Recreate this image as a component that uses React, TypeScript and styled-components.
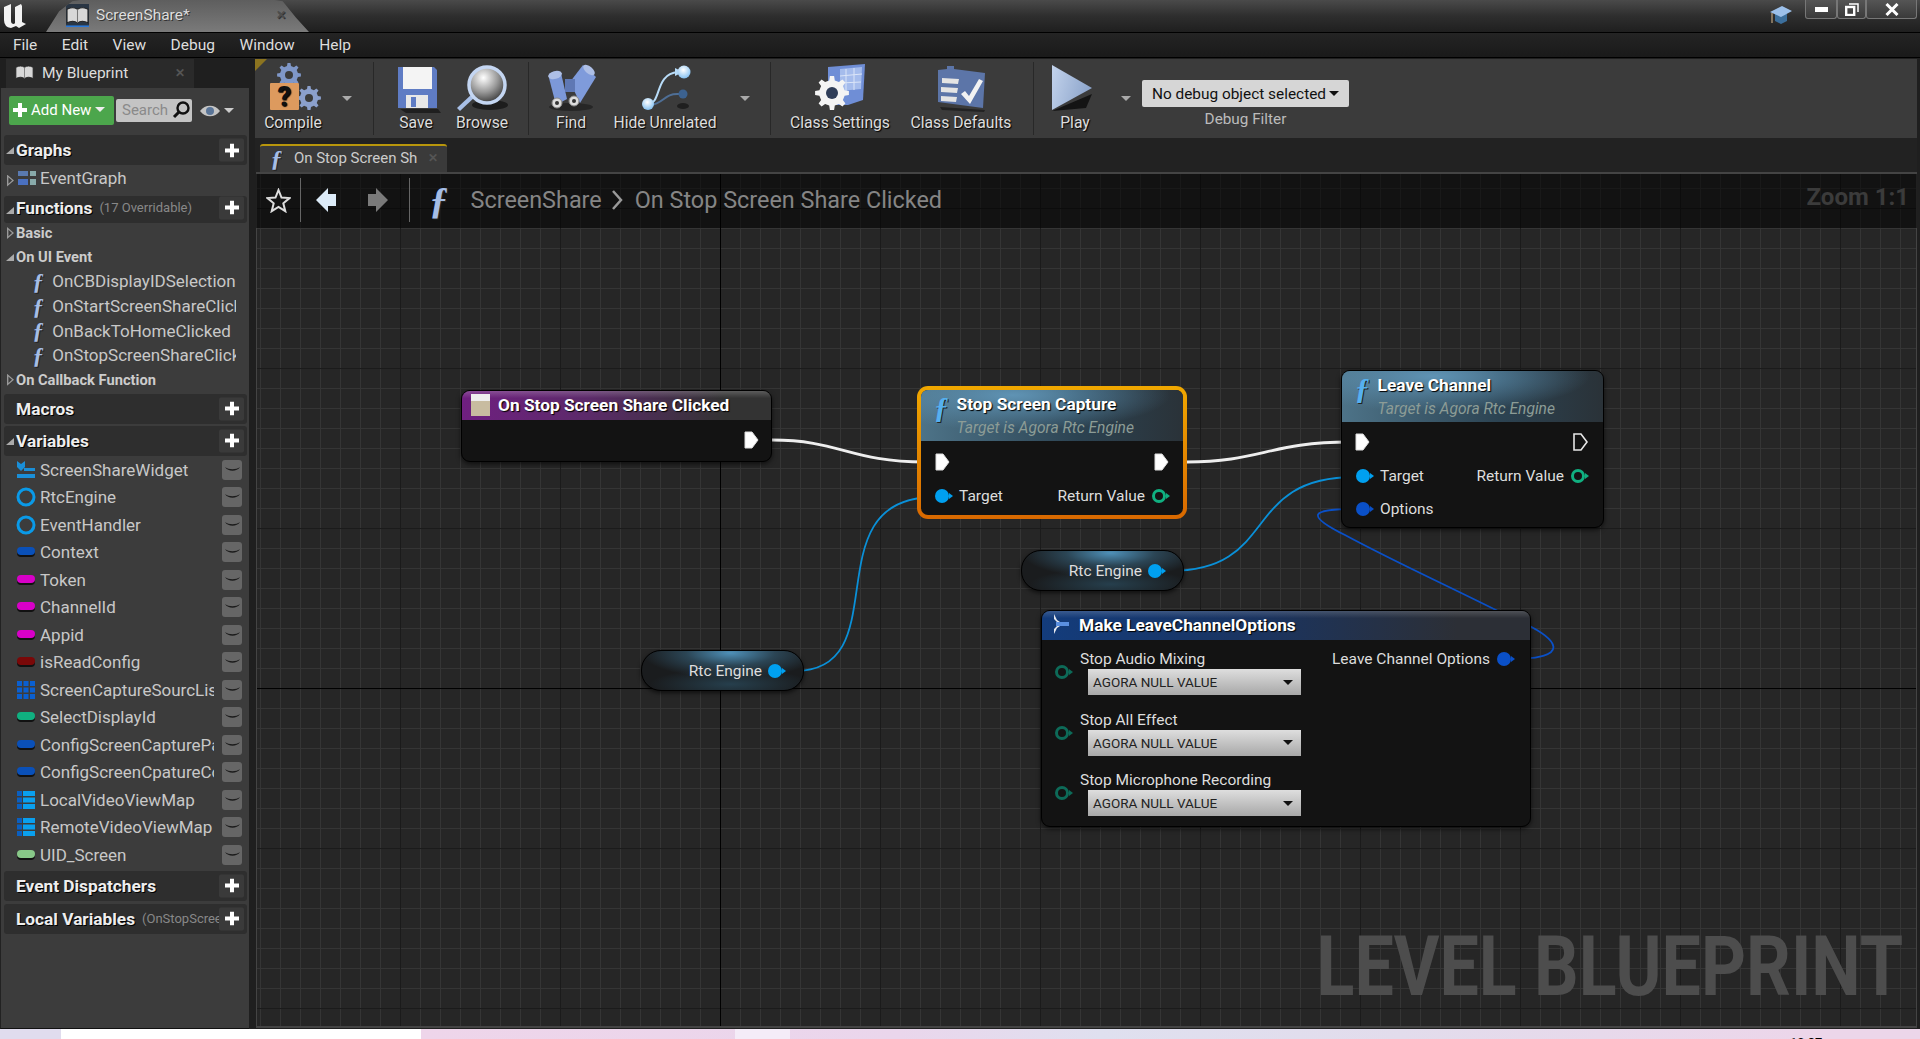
import React from "react";
import styled, { createGlobalStyle } from "styled-components";

const GlobalStyle = createGlobalStyle`
  html, body { margin: 0; padding: 0; background: #222; }
  body { font-family: Roboto, "Liberation Sans", sans-serif; }
  * { box-sizing: border-box; }
`;

const Screen = styled.div`
  width: 1920px;
  height: 1039px;
  overflow: hidden;
  display: flex;
  flex-direction: column;
  background: #1f1f1f;
`;

/* ---------- title + menu ---------- */

const TitleBar = styled.div`
  height: 33px;
  flex: none;
  display: flex;
  align-items: flex-end;
  position: relative;
  background: linear-gradient(#4a4a4a, #2e2e2e 50%, #1f1f1f);
  border-bottom: 1px solid #000;
`;

const Logo = styled.svg`
  width: 28px;
  height: 28px;
  margin: 0 17px 3px 1px;
`;

const DocTab = styled.div`
  width: 263px;
  height: 32px;
  display: flex;
  align-items: center;
  padding: 0 0 2px 20px;
  gap: 7px;
  color: #ddd;
  font-size: 15.5px;
  text-shadow: 1px 1px 0 #333;
  background: linear-gradient(#5e5e5e, #7a7a7a);
  clip-path: polygon(0 100%, 5% 35%, 10% 4%, 13% 0, 87% 0, 90% 4%, 95% 55%, 100% 100%);
`;

const TabClose = styled.span<{ $dim?: boolean }>`
  margin-left: auto;
  margin-right: ${(p) => (p.$dim ? 9 : 23)}px;
  color: ${(p) => (p.$dim ? "#555" : "#4d4d4d")};
  font-size: 12px;
  font-weight: 700;
`;

const WindowButtons = styled.div`
  position: absolute;
  right: 3px;
  top: 0;
  height: 19px;
  display: flex;
`;

const WindowButton = styled.div<{ $w: number }>`
  width: ${(p) => p.$w}px;
  height: 19px;
  display: flex;
  align-items: center;
  justify-content: center;
  background: linear-gradient(#555, #3a3a3a);
  border: 1px solid #777;
  border-top: none;
  border-radius: 0 0 3px 3px;
`;

const CapIcon = styled.svg`
  position: absolute;
  left: 1770px;
  top: 5px;
  width: 22px;
  height: 20px;
`;

const MenuBar = styled.div`
  height: 25px;
  flex: none;
  display: flex;
  align-items: center;
  padding-left: 13px;
  gap: 24.5px;
  color: #ddd;
  font-size: 15.5px;
  background: linear-gradient(#242424, #1a1a1a);
  border-bottom: 1px solid #000;
`;

/* ---------- body ---------- */

const Body = styled.div`
  flex: 1;
  min-height: 0;
  display: flex;
`;

const Side = styled.div`
  width: 255px;
  flex: none;
  display: flex;
  flex-direction: column;
  padding: 1px 6px 0 0;
`;

const SideTab = styled.div`
  margin-left: 6px;
  width: 188px;
  height: 29px;
  flex: none;
  display: flex;
  align-items: center;
  gap: 8px;
  padding: 0 0 2px 9px;
  color: #ddd;
  font-size: 15.5px;
  background: #2a2a2a;
`;

const SidePanel = styled.div`
  flex: 1;
  background: #3c3c3c;
  border-left: 1px solid #222;
  border-bottom: 1px solid #111;
  padding: 8px 0 0 3px;
`;

const SideTools = styled.div`
  height: 29px;
  display: flex;
  align-items: center;
  padding-left: 5px;
  margin-bottom: 10px;
`;

const AddNew = styled.div`
  width: 105px;
  height: 29px;
  display: flex;
  align-items: center;
  gap: 4px;
  padding: 0 0 2px 4px;
  color: #fff;
  font-size: 15px;
  background: #4ca64c;
  border-radius: 2px;
`;

const SearchBox = styled.div`
  width: 76px;
  height: 23px;
  margin-left: 2px;
  display: flex;
  align-items: center;
  justify-content: space-between;
  padding: 0 1px 1px 6px;
  color: #8a8a8a;
  font-size: 15px;
  background: #c4c4c4;
  border-radius: 2px;
`;

const EyeWrap = styled.div`
  margin-left: 7px;
  display: flex;
  align-items: center;
  gap: 3px;
`;

const SmallCaret = styled.span<{ $c?: string; $w?: number }>`
  display: inline-block;
  width: 0;
  height: 0;
  border-left: ${(p) => p.$w ?? 5}px solid transparent;
  border-right: ${(p) => p.$w ?? 5}px solid transparent;
  border-top: ${(p) => p.$w ?? 5}px solid ${(p) => p.$c ?? "#ccc"};
`;

const Band = styled.div<{ $h?: number; $mt?: number; $pb?: number }>`
  width: 243px;
  height: ${(p) => p.$h ?? 30}px;
  margin-top: ${(p) => p.$mt ?? 0}px;
  padding: 0 0 ${(p) => p.$pb ?? 0}px 12px;
  flex: none;
  display: flex;
  align-items: center;
  position: relative;
  color: #eee;
  font-size: 17.3px;
  font-weight: 700;
  white-space: nowrap;
  overflow: hidden;
  text-shadow: 1px 1px 0 #000;
  background: #2e2e2e;
  border-radius: 3px;
`;

const BandArrow = styled.span`
  position: absolute;
  left: 2px;
  top: 50%;
  margin-top: -3px;
  width: 0;
  height: 0;
  border-bottom: 7px solid #aaa;
  border-left: 8px solid transparent;
`;

const BandNote = styled.span`
  margin-left: 7px;
  color: #888;
  font-size: 13px;
  font-weight: 400;
  text-shadow: none;
`;

const PlusBox = styled.div<{ $up?: number }>`
  position: absolute;
  right: 3px;
  top: calc(50% - ${(p) => p.$up ?? 0}px);
  transform: translateY(-50%);
  width: 25px;
  height: 23px;
  display: flex;
  align-items: center;
  justify-content: center;
  background: #3a3a3a;
  border-radius: 2px;
`;

const Category = styled.div<{ $h: number; $mt?: number }>`
  height: ${(p) => p.$h}px;
  margin-top: ${(p) => p.$mt ?? 0}px;
  display: flex;
  align-items: center;
  padding-left: 12px;
  position: relative;
  color: #ccc;
  font-size: 14.7px;
  font-weight: 700;
`;

const HollowArrow = styled.span`
  position: absolute;
  left: 3px;
  top: 50%;
  margin-top: -6px;
  width: 7px;
  height: 12px;
  background: #999;
  clip-path: polygon(0 0, 100% 50%, 0 100%, 0 0, 20% 22%, 20% 78%, 72% 50%, 20% 22%);
`;

const FnRow = styled.div`
  width: 232px;
  height: 24.7px;
  display: flex;
  align-items: center;
  padding-left: 27px;
  gap: 7px;
  color: #c8c8c8;
  font-size: 17px;
  white-space: nowrap;
  overflow: hidden;
`;

const FuncGlyph = styled.span<{ $size: number; $c?: string }>`
  flex: none;
  display: inline-block;
  width: ${(p) => p.$size * 0.62}px;
  text-align: center;
  font-family: "Liberation Serif", serif;
  font-style: italic;
  font-weight: 700;
  font-size: ${(p) => p.$size}px;
  line-height: 1;
  color: ${(p) => p.$c ?? "#a5bde6"};
  text-shadow: 1px 1px 0 #222;
`;

const GraphRow = styled.div`
  height: 31px;
  display: flex;
  align-items: center;
  position: relative;
  padding: 0 0 5px 13px;
  gap: 3px;
  color: #c8c8c8;
  font-size: 17px;
`;

const VarRow = styled.div`
  height: 27.5px;
  display: flex;
  align-items: center;
  padding-left: 12px;
  gap: 4px;
  color: #c8c8c8;
  font-size: 17px;
`;

const VarName = styled.span`
  width: 174px;
  overflow: hidden;
  white-space: nowrap;
`;

const EyeBox = styled.div`
  width: 20px;
  height: 20px;
  margin-left: 4px;
  display: flex;
  align-items: center;
  justify-content: center;
  background: #666;
  border-radius: 3px;
`;

const Main = styled.div`
  flex: 1;
  min-width: 0;
  display: flex;
  flex-direction: column;
  padding: 1px 3px 1px 0;
  position: relative;
`;

const Toolbar = styled.div`
  height: 79px;
  flex: none;
  display: flex;
  align-items: flex-start;
  background: #3b3b3b;
  position: relative;
`;

const Corner = styled.div`
  position: absolute;
  left: 0;
  top: 0;
  width: 0;
  height: 0;
  border-top: 12px solid #8c7420;
  border-right: 12px solid transparent;
`;

const ToolButton = styled.div<{ $w: number }>`
  width: ${(p) => p.$w}px;
  flex: none;
  display: flex;
  flex-direction: column;
  align-items: center;
  padding-top: 2px;
  color: #ddd;
  font-size: 15.7px;
  white-space: nowrap;
  text-shadow: 1px 1px 1px #000;
`;

const ToolIcon = styled.svg`
  width: 60px;
  height: 56px;
  display: block;
`;

const ToolLabel = styled.div`
  height: 18px;
  line-height: 18px;
  margin-top: -3px;
`;

const CaretSlot = styled.div<{ $w?: number; $ml?: number }>`
  width: ${(p) => p.$w ?? 32}px;
  margin-left: ${(p) => p.$ml ?? 0}px;
  flex: none;
  height: 79px;
  display: flex;
  align-items: center;
  justify-content: center;
`;

const ToolSep = styled.div<{ $ml?: number; $mr?: number }>`
  width: 1px;
  height: 73px;
  margin: 3px ${(p) => p.$mr ?? 10}px 0 ${(p) => p.$ml ?? 10}px;
  background: #282828;
  flex: none;
`;

const DebugBox = styled.div`
  width: 207px;
  margin-top: 21px;
  display: flex;
  flex-direction: column;
  align-items: center;
`;

const DebugSelect = styled.div`
  width: 207px;
  height: 27px;
  display: flex;
  align-items: center;
  justify-content: center;
  gap: 3px;
  color: #111;
  font-size: 15.4px;
  background: #d6d6d6;
  border-radius: 2px;
`;

const DebugLabel = styled.div`
  margin-top: 3px;
  color: #bbb;
  font-size: 15.3px;
  line-height: 18px;
`;

const TabStrip = styled.div`
  height: 34px;
  flex: none;
  padding: 6px 0 0 5px;
  background: #222;
`;

const GraphTab = styled.div`
  width: 187px;
  height: 28px;
  display: flex;
  align-items: center;
  gap: 10px;
  padding: 0 0 2px 9px;
  color: #ccc;
  font-size: 15px;
  white-space: nowrap;
  background: #3a3a3a;
  border-top: 2px solid #b8960c;
  border-radius: 3px 3px 0 0;
`;

const ClipText = styled.span`
  width: 125px;
  overflow: hidden;
`;

/* ---------- graph ---------- */

const Canvas = styled.div`
  flex: 1;
  min-height: 0;
  position: relative;
  overflow: hidden;
  margin-left: 1px;
  background-color: #262626;
  background-image:
    linear-gradient(#000, #000), linear-gradient(#000, #000),
    linear-gradient(90deg, #1b1b1b 1px, transparent 1px),
    linear-gradient(#1b1b1b 1px, transparent 1px),
    linear-gradient(90deg, #353535 1px, transparent 1px),
    linear-gradient(#353535 1px, transparent 1px);
  background-size: 1px 100%, 100% 1px, 160px 160px, 160px 160px, 20px 20px, 20px 20px;
  background-position: 464px 0, 0 516px, 144px 0, 0 36px, 4px 0, 0 16px;
  background-repeat: no-repeat, no-repeat, repeat, repeat, repeat, repeat;
  box-shadow: inset 0 2px 0 #444, inset 0 -2px 0 #444, inset 1px 0 0 #444, inset -1px 0 0 #444;
`;

const Breadcrumb = styled.div`
  position: absolute;
  left: 0;
  right: 0;
  top: 2px;
  height: 54px;
  display: flex;
  align-items: center;
  padding: 0 0 2px 10px;
  background: rgba(0, 0, 0, 0.52);
  color: #858585;
  font-size: 23.4px;
`;

const CrumbSep = styled.div<{ $ml: number; $mr: number }>`
  width: 1px;
  height: 44px;
  margin: 0 ${(p) => p.$mr}px 0 ${(p) => p.$ml}px;
  background: #666;
`;

const CrumbRoot = styled.span`
  margin-left: 20px;
`;

const ZoomText = styled.div`
  position: absolute;
  right: 8px;
  top: 9px;
  color: #3b3b3b;
  font-size: 24px;
  font-weight: 700;
`;

const Watermark = styled.div`
  position: absolute;
  right: 14px;
  bottom: 19px;
  color: #4d4d4d;
  font-size: 84px;
  line-height: 84px;
  font-weight: 700;
  white-space: nowrap;
  transform: scaleX(0.833);
  transform-origin: right center;
`;

const Wires = styled.svg`
  position: absolute;
  left: 0;
  top: 0;
  width: 1661px;
  height: 856px;
`;

const Node = styled.div<{ $x: number; $y: number; $w: number; $h: number }>`
  position: absolute;
  left: ${(p) => p.$x - 256}px;
  top: ${(p) => p.$y - 172}px;
  width: ${(p) => p.$w}px;
  height: ${(p) => p.$h}px;
  display: flex;
  flex-direction: column;
  background: #131313;
  border: 1px solid #000;
  border-radius: 9px;
  overflow: hidden;
  box-shadow: 0 2px 5px rgba(0, 0, 0, 0.6);
  color: #ddd;
  font-size: 15.5px;
`;

const SelectedFrame = styled.div`
  position: absolute;
  left: ${917 - 256}px;
  top: ${386 - 172}px;
  width: 270px;
  height: 133px;
  padding: 4px;
  border-radius: 11px;
  background: linear-gradient(#f0a800, #d86800);
`;

const SelectedNode = styled.div`
  height: 100%;
  display: flex;
  flex-direction: column;
  background: #131313;
  border-radius: 7px;
  overflow: hidden;
  color: #ddd;
  font-size: 15.5px;
`;

const NodeHead = styled.div<{ $kind: "event" | "func" | "struct"; $h: number }>`
  height: ${(p) => p.$h}px;
  flex: none;
  display: flex;
  align-items: flex-start;
  gap: ${(p) => (p.$kind === "func" ? 6 : 8)}px;
  padding: ${(p) => (p.$kind === "func" ? "2px 0 0 11px" : "2px 0 0 9px")};
  color: #fff;
  font-size: 17.3px;
  font-weight: 700;
  text-shadow: 1px 1px 1px #000;
  background: ${(p) =>
    p.$kind === "event"
      ? "linear-gradient(rgba(255,255,255,.2), transparent 25%), linear-gradient(90deg, #6f1f80, #5c2a6a 40%, #333 85%)"
      : p.$kind === "func"
        ? "radial-gradient(ellipse 60% 70% at 35% 10%, #5f93b4, transparent), linear-gradient(90deg, #4d7388, #2c4352 60%, #2a3238)"
        : "linear-gradient(rgba(255,255,255,.16), transparent 25%), linear-gradient(90deg, #133c7c, #1b345f 45%, #2c2f36 85%)"};
`;

const HeadText = styled.div`
  line-height: 24px;
`;

const HeadSub = styled.div`
  margin-top: 2px;
  color: #8c9c96;
  font-size: 15.6px;
  font-weight: 400;
  font-style: italic;
  line-height: 20px;
  text-shadow: none;
`;

const PinRow = styled.div<{ $h?: number; $pad?: string; $end?: boolean }>`
  height: ${(p) => p.$h ?? 33}px;
  flex: none;
  display: flex;
  align-items: center;
  justify-content: ${(p) => (p.$end ? "flex-end" : "space-between")};
  padding: ${(p) => p.$pad ?? "0 12px"};
`;

const PinSide = styled.div`
  display: flex;
  align-items: center;
  gap: 7px;
`;

const DataPin = styled.span<{ $c: string; $hollow?: boolean }>`
  position: relative;
  flex: none;
  width: 14px;
  height: 14px;
  margin-right: 3px;
  border-radius: 50%;
  background: ${(p) => (p.$hollow ? "transparent" : p.$c)};
  border: ${(p) => (p.$hollow ? `3px solid ${p.$c}` : "none")};

  &::after {
    content: "";
    position: absolute;
    right: ${(p) => (p.$hollow ? -7 : -4)}px;
    top: ${(p) => (p.$hollow ? 1 : 4)}px;
    border-left: 4px solid ${(p) => p.$c};
    border-top: 3px solid transparent;
    border-bottom: 3px solid transparent;
  }
`;

const VarNode = styled.div<{ $x: number; $y: number }>`
  position: absolute;
  left: ${(p) => p.$x - 256}px;
  top: ${(p) => p.$y - 172}px;
  width: 163px;
  height: 41px;
  display: flex;
  align-items: center;
  justify-content: flex-end;
  gap: 6px;
  padding-right: 18px;
  color: #ddd;
  font-size: 15.5px;
  border: 1px solid #000;
  border-radius: 20px;
  background:
    radial-gradient(ellipse 55% 65% at 55% 5%, #4e90b8 0, rgba(60, 110, 140, 0.5) 50%, transparent 100%),
    radial-gradient(ellipse 50% 40% at 55% 85%, #263f4d, transparent), #1a1c1e;
  box-shadow: 0 2px 4px rgba(0, 0, 0, 0.6);
`;

const StructBody = styled.div`
  flex: 1;
  display: flex;
  justify-content: space-between;
  padding: 9px 0 0 13px;
`;

const StructInputs = styled.div`
  display: flex;
  flex-direction: column;
  gap: 14.6px;
`;

const StructInput = styled.div`
  display: flex;
  align-items: center;
  gap: 8px;
`;

const StructField = styled.div`
  display: flex;
  flex-direction: column;
`;

const FieldLabel = styled.div`
  line-height: 20px;
`;

const EnumSelect = styled.div`
  width: 213px;
  height: 26px;
  margin-left: 8px;
  display: flex;
  align-items: center;
  justify-content: space-between;
  padding: 0 8px 0 5px;
  color: #222;
  font-size: 13.5px;
  background: linear-gradient(#dedede, #a8a8a8);
`;

const StructOutput = styled.div`
  display: flex;
  align-items: flex-start;
  gap: 7px;
  line-height: 20px;
  margin-right: 16px;
`;

const OutputPin = styled(DataPin)`
  margin-top: 3px;
`;

const Taskbar = styled.div`
  height: 10px;
  flex: none;
  position: relative;
  overflow: hidden;
  background: linear-gradient(90deg, #e0dcee 0, #e0dcee 60px, #eed5ea 420px, #ead6ec 900px, #dfe0ef 1100px, #e2dcec 1400px, #ecd6ea 1800px);
`;

const TaskWhite = styled.div<{ $x: number; $w: number; $c: string }>`
  position: absolute;
  left: ${(p) => p.$x}px;
  top: 0;
  width: ${(p) => p.$w}px;
  height: 10px;
  background: ${(p) => p.$c};
`;

const Clock = styled.div`
  position: absolute;
  left: 1790px;
  top: 6px;
  color: #000;
  font-size: 13px;
  line-height: 15px;
`;

/* ---------- drawings ---------- */

const gearPath = (cx: number, cy: number, r: number, teeth = 8) => {
  const pts: string[] = [];
  for (let i = 0; i < teeth; i++) {
    const a = (i / teeth) * Math.PI * 2;
    const step = (Math.PI * 2) / teeth;
    [
      [a - step * 0.28, r * 0.76],
      [a - step * 0.16, r],
      [a + step * 0.16, r],
      [a + step * 0.28, r * 0.76],
    ].forEach(([t, d]) => pts.push(`${(cx + Math.cos(t) * d).toFixed(1)} ${(cy + Math.sin(t) * d).toFixed(1)}`));
  }
  return `M${pts.join("L")}Z`;
};

const Plus = ({ size = 14 }: { size?: number }) => (
  <svg width={size} height={size} viewBox="0 0 14 14">
    <path d="M5 0h4v5h5v4H9v5H5V9H0V5h5z" fill="#fff" />
  </svg>
);

const BookIcon = ({ size = 20, underline = false }: { size?: number; underline?: boolean }) => (
  <svg width={size} height={size} viewBox="0 0 22 22" style={{ flex: "none" }}>
    {underline && <rect x="0" y="0" width="22" height="22" fill="#2a3644" />}
    <path d="M1 5c4-2 7-2 10 0 3-2 6-2 10 0v13c-4-2-7-2-10 0-3-2-6-2-10 0z" fill="#d8d8d8" stroke="#222" />
    <path d="M11 5v13" stroke="#777" />
    {underline && <rect x="0" y="20.5" width="22" height="1.5" fill="#2a78d8" />}
  </svg>
);

const ExecPin = ({ filled = true }: { filled?: boolean }) => (
  <svg width="15" height="18" viewBox="0 0 15 18" style={{ flex: "none" }}>
    <path
      d="M1 1h7l6 8-6 8H1z"
      fill={filled ? "#fff" : "none"}
      stroke={filled ? "#ddd" : "#e8e8e8"}
      strokeWidth={filled ? 1 : 1.6}
    />
  </svg>
);

const VarIcon = ({ kind, color }: { kind: string; color: string }) => {
  if (kind === "ring")
    return (
      <svg width="20" height="20" viewBox="0 0 20 20" style={{ flex: "none" }}>
        <circle cx="10" cy="10" r="8" fill="none" stroke={color} strokeWidth="3" />
      </svg>
    );
  if (kind === "grid")
    return (
      <svg width="20" height="20" viewBox="0 0 20 20" style={{ flex: "none" }}>
        {[1, 7.5, 14].flatMap((x) =>
          [1, 7.5, 14].map((y) => <rect key={`${x}-${y}`} x={x} y={y} width="5" height="5" fill={color} />),
        )}
      </svg>
    );
  if (kind === "map")
    return (
      <svg width="20" height="20" viewBox="0 0 20 20" style={{ flex: "none" }}>
        {[1, 7.5, 14].map((y) => (
          <React.Fragment key={y}>
            <rect x="1" y={y} width="5" height="5" fill="#0a5fc0" />
            <rect x="7" y={y} width="12" height="5" fill={color} />
          </React.Fragment>
        ))}
      </svg>
    );
  if (kind === "widget")
    return (
      <svg width="20" height="20" viewBox="0 0 20 20" style={{ flex: "none" }}>
        <path d="M1 1l4 3 4-3v6l-4 4-4-4z" fill={color} />
        <path d="M8 8h11v3H8zM1 14h18v4H1z" fill={color} />
      </svg>
    );
  return (
    <svg width="20" height="20" viewBox="0 0 20 20" style={{ flex: "none" }}>
      <rect x="1" y="7" width="18" height="8" rx="4" fill="#111" />
      <rect x="1" y="5" width="18" height="8" rx="4" fill={color} />
    </svg>
  );
};

const ClosedEye = () => (
  <svg width="17" height="10" viewBox="0 0 17 10">
    <path d="M1 2c4 3 11 3 15 0-3 5-12 5-15 0z" fill="#1c1c1c" />
  </svg>
);

const CompileIcon = () => (
  <ToolIcon viewBox="0 0 60 56">
    <path d={gearPath(26, 14, 12)} fill="#7f97c8" />
    <circle cx="26" cy="14" r="4" fill="#3b3b3b" />
    <path d={gearPath(46, 37, 12)} fill="#8ba0cc" />
    <circle cx="46" cy="37" r="4" fill="#3b3b3b" />
    <rect x="7" y="22" width="29" height="27" rx="1" fill="#dd9a5e" />
    <text x="21.5" y="45" textAnchor="middle" fontSize="27" fontWeight="900" fontFamily="Roboto" fill="#111">
      ?
    </text>
  </ToolIcon>
);

const SaveIcon = () => (
  <ToolIcon viewBox="0 0 60 56">
    <path d="M12 6h36l3 3v38H12z" fill="#5f7cc4" />
    <rect x="17" y="6" width="29" height="22" fill="#f4f4f4" />
    <rect x="20" y="34" width="22" height="13" fill="#e8e8e8" />
    <rect x="25" y="36" width="5" height="10" fill="#5f7cc4" />
    <path d="M14 48h38l3 4H20z" fill="#1f1f1f" />
  </ToolIcon>
);

const BrowseIcon = () => (
  <ToolIcon viewBox="0 0 60 56">
    <defs>
      <radialGradient id="lens" cx="0.4" cy="0.3" r="0.8">
        <stop offset="0" stopColor="#fff" />
        <stop offset="0.5" stopColor="#999" />
        <stop offset="1" stopColor="#222" />
      </radialGradient>
    </defs>
    <ellipse cx="38" cy="44" rx="18" ry="5" fill="#1d1d1d" />
    <path d="M5 47l16-15 3 3L8 50z" fill="#a8bfe6" />
    <circle cx="35" cy="24" r="18" fill="url(#lens)" stroke="#c4d6f2" strokeWidth="3.5" />
  </ToolIcon>
);

const FindIcon = () => (
  <ToolIcon viewBox="0 0 60 56">
    <ellipse cx="30" cy="46" rx="22" ry="4" fill="#262626" />
    <path d="M8 17l12-5 6 26-11 6z" fill="#7c98d8" />
    <path d="M29 21l13-17 13 12-16 26z" fill="#7f9bdb" />
    <rect x="24" y="18" width="10" height="13" fill="#5f78b4" />
    <ellipse cx="14" cy="14" rx="7" ry="4" fill="#aebfe6" transform="rotate(-15 14 14)" />
    <ellipse cx="48" cy="9" rx="7" ry="3.5" fill="#aebfe6" transform="rotate(40 48 9)" />
    <circle cx="16" cy="42" r="5" fill="#ddd" stroke="#888" strokeWidth="1" />
    <circle cx="16" cy="42" r="2" fill="#333" />
    <circle cx="33" cy="40" r="5" fill="#ddd" stroke="#888" strokeWidth="1" />
    <circle cx="33" cy="40" r="2" fill="#333" />
  </ToolIcon>
);

const HideIcon = () => (
  <ToolIcon viewBox="0 0 60 56">
    <defs>
      <radialGradient id="ball" cx="0.45" cy="0.35" r="0.7">
        <stop offset="0" stopColor="#fff" />
        <stop offset="1" stopColor="#7cbcf0" />
      </radialGradient>
    </defs>
    <ellipse cx="48" cy="45" rx="6" ry="3" fill="#1f1f1f" />
    <path d="M13 43c14 0 6-30 30-32" fill="none" stroke="#b8dcf8" strokeWidth="2" />
    <path d="M40 7l8 4-8 4z" fill="#b8dcf8" />
    <path d="M15 44c14-1 14-12 29-11" fill="none" stroke="#4f6f96" strokeWidth="2" />
    <circle cx="48" cy="33" r="4.5" fill="#3c6290" />
    <circle cx="13" cy="43" r="6" fill="url(#ball)" />
    <circle cx="49" cy="11" r="6.5" fill="url(#ball)" />
  </ToolIcon>
);

const SettingsIcon = () => (
  <ToolIcon viewBox="0 0 60 56">
    <path d="M18 6l37-3-2 36-15 5H18z" fill="#6f8ed6" />
    <path d="M30 8l22-2-1 22-21 2z" fill="#a5bcec" />
    <path d="M36 8v22M44 7v22M30 15l22-2M30 22l21-1" stroke="#dbe5f8" strokeWidth="1" />
    <path d={gearPath(22, 32, 17)} fill="#f4f4f4" />
    <circle cx="22" cy="32" r="6" fill="#2f3d58" />
  </ToolIcon>
);

const DefaultsIcon = () => (
  <ToolIcon viewBox="0 0 60 56">
    <path d="M9 46l45 3-1 2-42-2z" fill="#222" />
    <path d="M7 9l9-1v-3h7v3l31 4-2 35-45-6z" fill="#5c75a8" />
    <path d="M11 17l17 1-1 5-16-1zM10 26l17 1-1 5-16-1zM10 35l16 1-1 5-15-1z" fill="#e4e4e4" />
    <path d="M30 33l4-3 4 5 10-17 4 2-13 23z" fill="#f2f2f2" />
  </ToolIcon>
);

const PlayIcon = () => (
  <ToolIcon viewBox="0 0 60 56">
    <defs>
      <linearGradient id="playG" x1="0" y1="0" x2="1" y2="0.3">
        <stop offset="0" stopColor="#c3d3ec" />
        <stop offset="1" stopColor="#8ea6cc" />
      </linearGradient>
    </defs>
    <path d="M7 50l40-17-6 14z" fill="#141414" />
    <path d="M7 4l40 23L7 49z" fill="url(#playG)" />
  </ToolIcon>
);

const StructIcon = () => (
  <svg width="20" height="22" viewBox="0 0 20 22" style={{ flex: "none" }}>
    <path d="M3 1l3 6 3 2H6L3 6zM3 21l3-6 3-2H6l-3 3z" fill="#e4e8f0" />
    <path d="M5 9h13v4H5z" fill="#5a8fe0" />
  </svg>
);

const FN_LIST = ["OnCBDisplayIDSelectionChanged", "OnStartScreenShareClicked", "OnBackToHomeClicked", "OnStopScreenShareClicked"];

const VARS = [
  { name: "ScreenShareWidget", kind: "widget", color: "#1a8fd8" },
  { name: "RtcEngine", kind: "ring", color: "#0a9ae8" },
  { name: "EventHandler", kind: "ring", color: "#0a9ae8" },
  { name: "Context", kind: "pill", color: "#0a50b8" },
  { name: "Token", kind: "pill", color: "#d800c8" },
  { name: "ChannelId", kind: "pill", color: "#d800c8" },
  { name: "Appid", kind: "pill", color: "#d800c8" },
  { name: "isReadConfig", kind: "pill", color: "#7a0808" },
  { name: "ScreenCaptureSourcList", kind: "grid", color: "#0a5fd0" },
  { name: "SelectDisplayId", kind: "pill", color: "#10b080" },
  { name: "ConfigScreenCaptureParam", kind: "pill", color: "#0a50b8" },
  { name: "ConfigScreenCpatureConfig", kind: "pill", color: "#0a50b8" },
  { name: "LocalVideoViewMap", kind: "map", color: "#0aa0ee" },
  { name: "RemoteVideoViewMap", kind: "map", color: "#0aa0ee" },
  { name: "UID_Screen", kind: "pill", color: "#88c888" },
];

const STRUCT_FIELDS = ["Stop Audio Mixing", "Stop All Effect", "Stop Microphone Recording"];

export default function App() {
  return (
    <Screen>
      <GlobalStyle />
      <TitleBar>
        <Logo viewBox="0 0 28 28">
          <path d="M3 6l7-3v17q0 3 3 3l1-1V6l6-3 1 2v16l4 2-7 4-3-2-5 2q-7-1-7-8z" fill="#f2f2f2" />
        </Logo>
        <DocTab>
          <BookIcon size={23} underline />
          <span>ScreenShare*</span>
          <TabClose>✕</TabClose>
        </DocTab>
        <CapIcon viewBox="0 0 22 20">
          <path d="M5 9v7l6 3 6-3V9z" fill="#3c6f9c" />
          <path d="M0 7l12-6 10 5-11 6z" fill="#9cc0ea" />
          <path d="M2 8v10" stroke="#a08c70" strokeWidth="1.5" />
        </CapIcon>
        <WindowButtons>
          <WindowButton $w={32}>
            <svg width="13" height="5" viewBox="0 0 13 5">
              <rect width="13" height="5" fill="#fff" />
            </svg>
          </WindowButton>
          <WindowButton $w={29}>
            <svg width="14" height="13" viewBox="0 0 14 13">
              <path d="M4 1h9v8" fill="none" stroke="#fff" strokeWidth="1.5" />
              <rect x="1.2" y="4" width="8" height="8" fill="none" stroke="#fff" strokeWidth="2.4" />
            </svg>
          </WindowButton>
          <WindowButton $w={51}>
            <svg width="14" height="13" viewBox="0 0 14 13">
              <path d="M1.5 1l11 11M12.5 1l-11 11" stroke="#fff" strokeWidth="3" />
            </svg>
          </WindowButton>
        </WindowButtons>
      </TitleBar>

      <MenuBar>
        {["File", "Edit", "View", "Debug", "Window", "Help"].map((m) => (
          <span key={m}>{m}</span>
        ))}
      </MenuBar>

      <Body>
        <Side>
          <SideTab>
            <BookIcon size={19} />
            <span>My Blueprint</span>
            <TabClose $dim>✕</TabClose>
          </SideTab>
          <SidePanel>
            <SideTools>
              <AddNew>
                <Plus />
                <span>Add New</span>
                <SmallCaret $c="#eee" />
              </AddNew>
              <SearchBox>
                <span>Search</span>
                <svg width="20" height="20" viewBox="0 0 20 20">
                  <circle cx="12" cy="8" r="5.5" fill="none" stroke="#111" strokeWidth="2.4" />
                  <path d="M8 12l-5 5" stroke="#111" strokeWidth="3" />
                </svg>
              </SearchBox>
              <EyeWrap>
                <svg width="22" height="14" viewBox="0 0 22 14">
                  <path d="M1 7c5-7 15-7 20 0-5 7-15 7-20 0z" fill="#c4c4c4" />
                  <circle cx="11" cy="7" r="4" fill="#5a7598" />
                </svg>
                <SmallCaret $c="#ccc" />
              </EyeWrap>
            </SideTools>

            <Band>
              <BandArrow />
              Graphs
              <PlusBox>
                <Plus />
              </PlusBox>
            </Band>
            <GraphRow>
              <HollowArrow />
              <svg width="20" height="16" viewBox="0 0 20 16" style={{ flex: "none" }}>
                <path d="M1 1h10v5H1z" fill="#5a7ab0" />
                <path d="M13 1h6v5h-6z" fill="#8aa" />
                <path d="M1 9h10v6H1z" fill="#4a70c0" />
                <path d="M13 9h6v6h-6z" fill="#8aa" />
              </svg>
              EventGraph
            </GraphRow>
            <Band $h={27} $pb={4}>
              <BandArrow />
              Functions
              <BandNote>(17 Overridable)</BandNote>
              <PlusBox $up={2}>
                <Plus />
              </PlusBox>
            </Band>
            <Category $h={20}>
              <HollowArrow />
              Basic
            </Category>
            <Category $h={24} $mt={2}>
              <BandArrow />
              On UI Event
            </Category>
            {FN_LIST.map((f) => (
              <FnRow key={f}>
                <FuncGlyph $size={23}>ƒ</FuncGlyph>
                <span>{f}</span>
              </FnRow>
            ))}
            <Category $h={24}>
              <HollowArrow />
              On Callback Function
            </Category>
            <Band $mt={2}>
              Macros
              <PlusBox>
                <Plus />
              </PlusBox>
            </Band>
            <Band $mt={2}>
              <BandArrow />
              Variables
              <PlusBox>
                <Plus />
              </PlusBox>
            </Band>
            {VARS.map((v) => (
              <VarRow key={v.name}>
                <VarIcon kind={v.kind} color={v.color} />
                <VarName>{v.name}</VarName>
                <EyeBox>
                  <ClosedEye />
                </EyeBox>
              </VarRow>
            ))}
            <Band $mt={2.5}>
              Event Dispatchers
              <PlusBox>
                <Plus />
              </PlusBox>
            </Band>
            <Band $mt={3}>
              Local Variables
              <BandNote>(OnStopScree</BandNote>
              <PlusBox>
                <Plus />
              </PlusBox>
            </Band>
          </SidePanel>
        </Side>

        <Main>
          <Toolbar>
            <Corner />
            <ToolButton $w={76}>
              <CompileIcon />
              <ToolLabel>Compile</ToolLabel>
            </ToolButton>
            <CaretSlot>
              <SmallCaret $c="#aaa" />
            </CaretSlot>
            <ToolSep />
            <ToolButton $w={64}>
              <SaveIcon />
              <ToolLabel>Save</ToolLabel>
            </ToolButton>
            <ToolButton $w={68}>
              <BrowseIcon />
              <ToolLabel>Browse</ToolLabel>
            </ToolButton>
            <ToolSep $ml={12} $mr={12} />
            <ToolButton $w={60}>
              <FindIcon />
              <ToolLabel>Find</ToolLabel>
            </ToolButton>
            <ToolButton $w={128}>
              <HideIcon />
              <ToolLabel>Hide Unrelated</ToolLabel>
            </ToolButton>
            <CaretSlot>
              <SmallCaret $c="#aaa" />
            </CaretSlot>
            <ToolSep $ml={9} $mr={10} />
            <ToolButton $w={118}>
              <SettingsIcon />
              <ToolLabel>Class Settings</ToolLabel>
            </ToolButton>
            <ToolButton $w={124}>
              <DefaultsIcon />
              <ToolLabel>Class Defaults</ToolLabel>
            </ToolButton>
            <ToolSep $mr={11} />
            <ToolButton $w={60}>
              <PlayIcon />
              <ToolLabel>Play</ToolLabel>
            </ToolButton>
            <CaretSlot $ml={5}>
              <SmallCaret $c="#aaa" />
            </CaretSlot>
            <DebugBox>
              <DebugSelect>
                No debug object selected
                <SmallCaret $c="#111" />
              </DebugSelect>
              <DebugLabel>Debug Filter</DebugLabel>
            </DebugBox>
          </Toolbar>

          <TabStrip>
            <GraphTab>
              <FuncGlyph $size={24}>ƒ</FuncGlyph>
              <ClipText>On Stop Screen Sh</ClipText>
              <TabClose $dim>✕</TabClose>
            </GraphTab>
          </TabStrip>

          <Canvas>
            <Watermark>LEVEL BLUEPRINT</Watermark>
            <Breadcrumb>
              <svg width="25" height="25" viewBox="0 0 25 25">
                <path
                  d="M12.5 2l3 7.5 8 .6-6.2 5.2 2 7.9-6.8-4.3-6.8 4.3 2-7.9L1.5 10.1l8-.6z"
                  fill="none"
                  stroke="#ddd"
                  strokeWidth="2"
                />
              </svg>
              <CrumbSep $ml={9} $mr={14} />
              <svg width="22" height="26" viewBox="0 0 22 26">
                <path d="M1 13L13 1v6h8v12h-8v6z" fill="#dcebf8" />
              </svg>
              <svg width="22" height="26" viewBox="0 0 22 26" style={{ marginLeft: 30 }}>
                <path d="M21 13L9 1v6H1v12h8v6z" fill="#7a7a7a" />
              </svg>
              <CrumbSep $ml={20} $mr={17} />
              <FuncGlyph $size={38}>ƒ</FuncGlyph>
              <CrumbRoot>ScreenShare</CrumbRoot>
              <svg width="12" height="22" viewBox="0 0 12 22" style={{ margin: "0 12px 0 9px" }}>
                <path d="M2 2l8 9-8 9" fill="none" stroke="#999" strokeWidth="2.5" />
              </svg>
              <span>On Stop Screen Share Clicked</span>
              <ZoomText>Zoom 1:1</ZoomText>
            </Breadcrumb>

            <Wires viewBox="256 172 1661 856">
              <g fill="none" strokeLinecap="round">
                <path d="M772 440 C 840 440, 850 462, 925 462" stroke="#eee" strokeWidth="2.8" />
                <path d="M1187 462 C 1260 462, 1270 442, 1350 442" stroke="#eee" strokeWidth="2.8" />
                <path d="M795 671 C 900 671, 810 497, 935 497" stroke="#0a90d8" strokeWidth="1.8" />
                <path d="M1170 571 C 1280 571, 1240 477, 1355 477" stroke="#0a90d8" strokeWidth="1.8" />
                <path
                  d="M1512 659 C 1570 659, 1565 640, 1510 617 C 1440 582, 1395 562, 1345 535 C 1305 515, 1310 509, 1355 509"
                  stroke="#0a50c8"
                  strokeWidth="1.8"
                />
              </g>
            </Wires>

            <Node $x={461} $y={390} $w={311} $h={72}>
              <NodeHead $kind="event" $h={29}>
                <svg width="19" height="24" viewBox="0 0 19 24" style={{ flex: "none" }}>
                  <rect x="0" y="1" width="19" height="7" fill="#eee" />
                  <rect x="0" y="8" width="19" height="15" fill="#c8bca0" />
                </svg>
                <HeadText>On Stop Screen Share Clicked</HeadText>
              </NodeHead>
              <PinRow $pad="6px 12px 0 0" $end>
                <ExecPin />
              </PinRow>
            </Node>

            <SelectedFrame>
              <SelectedNode>
                <NodeHead $kind="func" $h={51}>
                  <FuncGlyph $size={30} $c="#55b0f0">
                    ƒ
                  </FuncGlyph>
                  <div>
                    <HeadText>Stop Screen Capture</HeadText>
                    <HeadSub>Target is Agora Rtc Engine</HeadSub>
                  </div>
                </NodeHead>
                <PinRow $h={40} $pad="2px 14px 0 14px">
                  <ExecPin />
                  <ExecPin />
                </PinRow>
                <PinRow $h={28} $pad="1px 14px 0 14px">
                  <PinSide>
                    <DataPin $c="#00a0f0" />
                    Target
                  </PinSide>
                  <PinSide>
                    Return Value
                    <DataPin $c="#10b080" $hollow />
                  </PinSide>
                </PinRow>
              </SelectedNode>
            </SelectedFrame>

            <Node $x={1341} $y={370} $w={263} $h={158}>
              <NodeHead $kind="func" $h={51}>
                <FuncGlyph $size={30} $c="#55b0f0">
                  ƒ
                </FuncGlyph>
                <div>
                  <HeadText>Leave Channel</HeadText>
                  <HeadSub>Target is Agora Rtc Engine</HeadSub>
                </div>
              </NodeHead>
              <PinRow $h={40} $pad="0 15px 0 13px">
                <ExecPin />
                <ExecPin filled={false} />
              </PinRow>
              <PinRow $h={28} $pad="0 15px 0 14px">
                <PinSide>
                  <DataPin $c="#00a0f0" />
                  Target
                </PinSide>
                <PinSide>
                  Return Value
                  <DataPin $c="#10b080" $hollow />
                </PinSide>
              </PinRow>
              <PinRow $h={37} $pad="0 15px 0 14px">
                <PinSide>
                  <DataPin $c="#0a50c8" />
                  Options
                </PinSide>
              </PinRow>
            </Node>

            <VarNode $x={1021} $y={550}>
              Rtc Engine
              <DataPin $c="#00a0f0" />
            </VarNode>
            <VarNode $x={641} $y={650}>
              Rtc Engine
              <DataPin $c="#00a0f0" />
            </VarNode>

            <Node $x={1041} $y={610} $w={490} $h={217}>
              <NodeHead $kind="struct" $h={29}>
                <StructIcon />
                <HeadText>Make LeaveChannelOptions</HeadText>
              </NodeHead>
              <StructBody>
                <StructInputs>
                  {STRUCT_FIELDS.map((f) => (
                    <StructInput key={f}>
                      <DataPin $c="#0d6a58" $hollow />
                      <StructField>
                        <FieldLabel>{f}</FieldLabel>
                        <EnumSelect>
                          AGORA NULL VALUE
                          <SmallCaret $c="#111" $w={5} />
                        </EnumSelect>
                      </StructField>
                    </StructInput>
                  ))}
                </StructInputs>
                <StructOutput>
                  Leave Channel Options
                  <OutputPin $c="#0a50c8" />
                </StructOutput>
              </StructBody>
            </Node>
          </Canvas>
        </Main>
      </Body>

      <Taskbar>
        <TaskWhite $x={61} $w={360} $c="#fff" />
        <TaskWhite $x={735} $w={55} $c="#f4ecf8" />
        <Clock>10:37</Clock>
      </Taskbar>
    </Screen>
  );
}
